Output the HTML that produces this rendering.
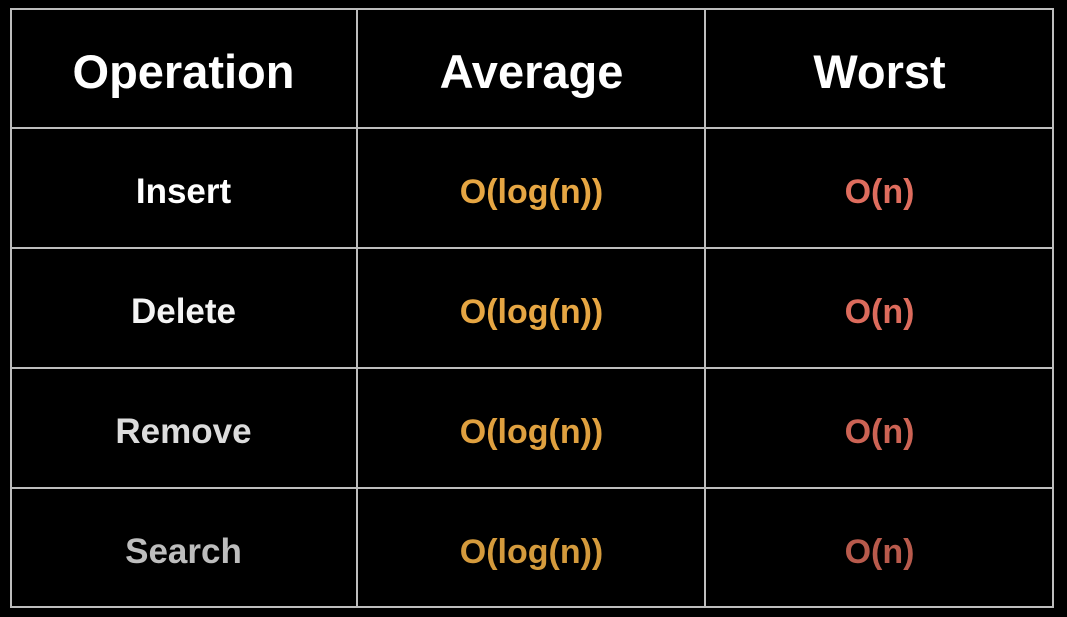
<!DOCTYPE html>
<html><head><meta charset="utf-8"><style>
html,body{margin:0;padding:0;background:#000;width:1067px;height:617px;overflow:hidden}
.g{position:absolute;background:#bdbdbd}
.t{position:absolute;font-family:"Liberation Sans",sans-serif;font-weight:bold;text-align:center;width:347px;line-height:1}
.h{font-size:47px;color:#fff}
.r{font-size:35px}
.a{font-size:34px}
</style></head><body>
<div class="g" style="left:10px;top:8px;width:1044px;height:2px"></div>
<div class="g" style="left:10px;top:127px;width:1044px;height:2px"></div>
<div class="g" style="left:10px;top:247px;width:1044px;height:2px"></div>
<div class="g" style="left:10px;top:367px;width:1044px;height:2px"></div>
<div class="g" style="left:10px;top:487px;width:1044px;height:2px"></div>
<div class="g" style="left:10px;top:606px;width:1044px;height:2px"></div>
<div class="g" style="left:10px;top:8px;width:2px;height:600px"></div>
<div class="g" style="left:356px;top:8px;width:2px;height:600px"></div>
<div class="g" style="left:704px;top:8px;width:2px;height:600px"></div>
<div class="g" style="left:1052px;top:8px;width:2px;height:600px"></div>

<div class="t h" style="left:10px;top:48px">Operation</div>
<div class="t h" style="left:358px;top:48px">Average</div>
<div class="t h" style="left:706px;top:48px">Worst</div>

<div class="t r" style="left:10px;top:174px;color:#fff">Insert</div>
<div class="t r" style="left:10px;top:294px;color:#f4f4f4">Delete</div>
<div class="t r" style="left:10px;top:414px;color:#dcdcdc">Remove</div>
<div class="t r" style="left:10px;top:534px;color:#bdbdbd">Search</div>

<div class="t a" style="left:358px;top:175px;color:#e6a643">O(log(n))</div>
<div class="t a" style="left:358px;top:295px;color:#e6a643">O(log(n))</div>
<div class="t a" style="left:358px;top:415px;color:#dfa03f">O(log(n))</div>
<div class="t a" style="left:358px;top:535px;color:#d49a3c">O(log(n))</div>

<div class="t a" style="left:706px;top:175px;color:#df6d5e">O(n)</div>
<div class="t a" style="left:706px;top:295px;color:#dc6b5c">O(n)</div>
<div class="t a" style="left:706px;top:415px;color:#cc6354">O(n)</div>
<div class="t a" style="left:706px;top:535px;color:#b85a4c">O(n)</div>
</body></html>
